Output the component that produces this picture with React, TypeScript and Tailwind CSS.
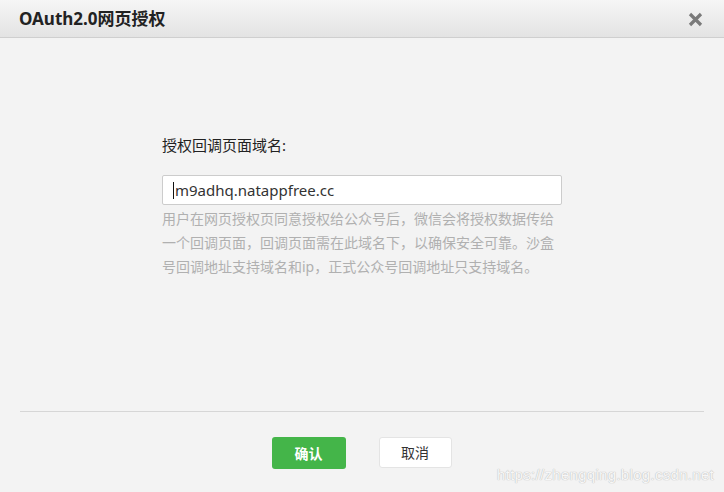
import React from "react";

const font = { fontFamily: '"Microsoft YaHei", "Noto Sans", "Noto Sans CJK SC", sans-serif' };

export default function App() {
  return (
    <div
      className="relative w-[724px] h-[492px] bg-[#f3f3f3] overflow-hidden flex flex-col"
      style={font}
    >
      {/* Header */}
      <div className="h-[38px] shrink-0 flex items-center justify-between pl-[19px] pr-[20px] border-b border-[#cfcfcf] bg-gradient-to-b from-[#f6f6f6] to-[#e3e3e3]">
        <div className="text-[17px] font-bold text-[#222] leading-none tracking-[0px]">
          OAuth2.0网页授权
        </div>
        <svg width="15" height="15" viewBox="0 0 15 15" className="mr-[1px] mt-[1px]">
          <path d="M2 2 L13 13 M13 2 L2 13" stroke="#7a7a7a" strokeWidth="3.2" strokeLinecap="butt" />
        </svg>
      </div>

      {/* Body */}
      <div className="h-[373px] shrink-0 flex justify-center pt-[97px]">
        <div className="w-[400px] flex flex-col">
          <div className="text-[15px] leading-[20px] text-[#222]">授权回调页面域名:</div>
          <div className="mt-[20px] h-[30px] bg-white border border-[#cccccc] rounded-[2px] flex items-center pl-[10px]">
            <span className="w-px h-[17px] bg-[#111] mr-px"></span>
            <span className="text-[15px] text-[#333] leading-none">m9adhq.natappfree.cc</span>
          </div>
          <div className="mt-[2px] text-[14px] leading-[24px] text-[#b0b0b0] tracking-[0px]">
            <div className="whitespace-nowrap">用户在网页授权页同意授权给公众号后，微信会将授权数据传给</div>
            <div className="whitespace-nowrap">一个回调页面，回调页面需在此域名下，以确保安全可靠。沙盒</div>
            <div className="whitespace-nowrap">号回调地址支持域名和ip，正式公众号回调地址只支持域名。</div>
          </div>
        </div>
      </div>

      {/* Divider */}
      <div className="mx-[20px] h-px bg-[#d6d6d6] shrink-0"></div>

      {/* Footer */}
      <div className="flex justify-center gap-[33px] pt-[25px] pr-[1px]">
        <button className="w-[74px] h-[32px] rounded-[3px] bg-[#44b549] text-white text-[14px] font-bold">
          确认
        </button>
        <button className="w-[73px] h-[31px] rounded-[3px] bg-white border border-[#e4e4e4] text-[#333] text-[14px]">
          取消
        </button>
      </div>

      {/* Watermark */}
      <div
        className="absolute right-[10px] bottom-[10px] text-[15px] leading-none text-[#f7f7f7] tracking-[0.3px]"
        style={{ fontFamily: '"Liberation Sans", Arial, sans-serif', textShadow: "0 0 1px #bdbdbd, 0 0 1px #bdbdbd" }}
      >
        https://zhengqing.blog.csdn.net
      </div>
    </div>
  );
}
